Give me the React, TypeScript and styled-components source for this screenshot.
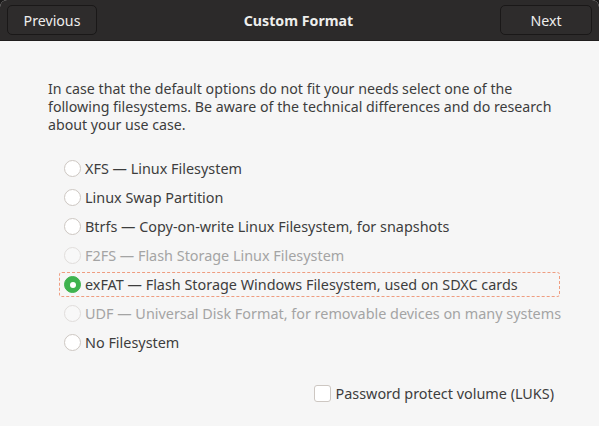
import React from "react";
import styled, { createGlobalStyle } from "styled-components";

const GlobalStyle = createGlobalStyle`
  html, body {
    margin: 0;
    padding: 0;
    background: #1b1a1a;
  }
  body {
    font-family: "Noto Sans", "Open Sans", sans-serif;
  }
`;

const Window = styled.div`
  width: 599px;
  height: 426px;
  display: flex;
  flex-direction: column;
  border-radius: 7px 7px 0 0;
  overflow: hidden;
  background: #f6f6f6;
`;

const HeaderBar = styled.div`
  height: 41px;
  box-sizing: border-box;
  display: flex;
  align-items: center;
  justify-content: space-between;
  padding: 0 7px;
  background: #2c2a2a;
  border-bottom: 1px solid #1f1d1d;
`;

const HeaderButton = styled.button<{ $w: number }>`
  width: ${(p) => p.$w}px;
  height: 30px;
  box-sizing: border-box;
  border: 1px solid #1a1818;
  border-radius: 5px;
  background: #2e2c2c;
  color: #eeeeec;
  font-family: inherit;
  font-size: 14.2px;
  cursor: pointer;
`;

const Title = styled.div`
  color: #eeeeec;
  font-weight: bold;
  font-size: 14.2px;
`;

const Content = styled.div`
  flex: 1;
  display: flex;
  flex-direction: column;
  padding: 39px 40px 0 48px;
`;

const Intro = styled.p`
  margin: 0;
  color: #3d3d3d;
  font-size: 14.2px;
  line-height: 18px;
`;

const OptionList = styled.div`
  display: flex;
  flex-direction: column;
  gap: 4px;
  margin: 22px 0 0 11px;
  width: 501px;
`;

const OptionRow = styled.label<{ $focused?: boolean; $disabled?: boolean }>`
  height: 25px;
  box-sizing: border-box;
  display: flex;
  align-items: center;
  gap: 4px;
  padding-left: 4px;
  white-space: nowrap;
  border: 1px dashed ${(p) => (p.$focused ? "rgba(233, 84, 32, 0.55)" : "transparent")};
  border-radius: 3px;
  font-size: 14.4px;
  color: ${(p) => (p.$disabled ? "#a4a4a4" : "#3d3d3d")};
`;

const Radio = styled.span<{ $checked?: boolean; $disabled?: boolean }>`
  width: 17px;
  height: 17px;
  box-sizing: border-box;
  border-radius: 50%;
  flex-shrink: 0;
  display: flex;
  align-items: center;
  justify-content: center;
  border: 1px solid ${(p) => (p.$checked ? "#3eb34f" : p.$disabled ? "#e0dddb" : "#cdc7c2")};
  background: ${(p) => (p.$checked ? "#3eb34f" : p.$disabled ? "#f8f8f8" : "#ffffff")};
  &::after {
    content: "";
    display: ${(p) => (p.$checked ? "block" : "none")};
    width: 6px;
    height: 6px;
    border-radius: 50%;
    background: #ffffff;
  }
`;

const Footer = styled.div`
  display: flex;
  justify-content: flex-end;
  margin-top: auto;
  padding: 0 5px 23px 0;
`;

const CheckRow = styled.label`
  display: flex;
  align-items: center;
  gap: 5px;
  font-size: 14.4px;
  color: #3d3d3d;
`;

const CheckBox = styled.span`
  width: 17px;
  height: 17px;
  box-sizing: border-box;
  border: 1px solid #cdc7c2;
  border-radius: 3px;
  background: #ffffff;
`;

type Option = { label: string; disabled?: boolean; checked?: boolean };

const options: Option[] = [
  { label: "XFS — Linux Filesystem" },
  { label: "Linux Swap Partition" },
  { label: "Btrfs — Copy-on-write Linux Filesystem, for snapshots" },
  { label: "F2FS — Flash Storage Linux Filesystem", disabled: true },
  { label: "exFAT — Flash Storage Windows Filesystem, used on SDXC cards", checked: true },
  { label: "UDF — Universal Disk Format, for removable devices on many systems", disabled: true },
  { label: "No Filesystem" },
];

export default function App() {
  return (
    <>
      <GlobalStyle />
      <Window>
        <HeaderBar>
          <HeaderButton $w={90}>Previous</HeaderButton>
          <Title>Custom Format</Title>
          <HeaderButton $w={92}>Next</HeaderButton>
        </HeaderBar>
        <Content>
          <Intro>
            In case that the default options do not fit your needs select one of the following
            filesystems. Be aware of the technical differences and do research about your use case.
          </Intro>
          <OptionList>
            {options.map((o) => (
              <OptionRow key={o.label} $focused={o.checked} $disabled={o.disabled}>
                <Radio $checked={o.checked} $disabled={o.disabled} />
                {o.label}
              </OptionRow>
            ))}
          </OptionList>
          <Footer>
            <CheckRow>
              <CheckBox />
              Password protect volume (LUKS)
            </CheckRow>
          </Footer>
        </Content>
      </Window>
    </>
  );
}
